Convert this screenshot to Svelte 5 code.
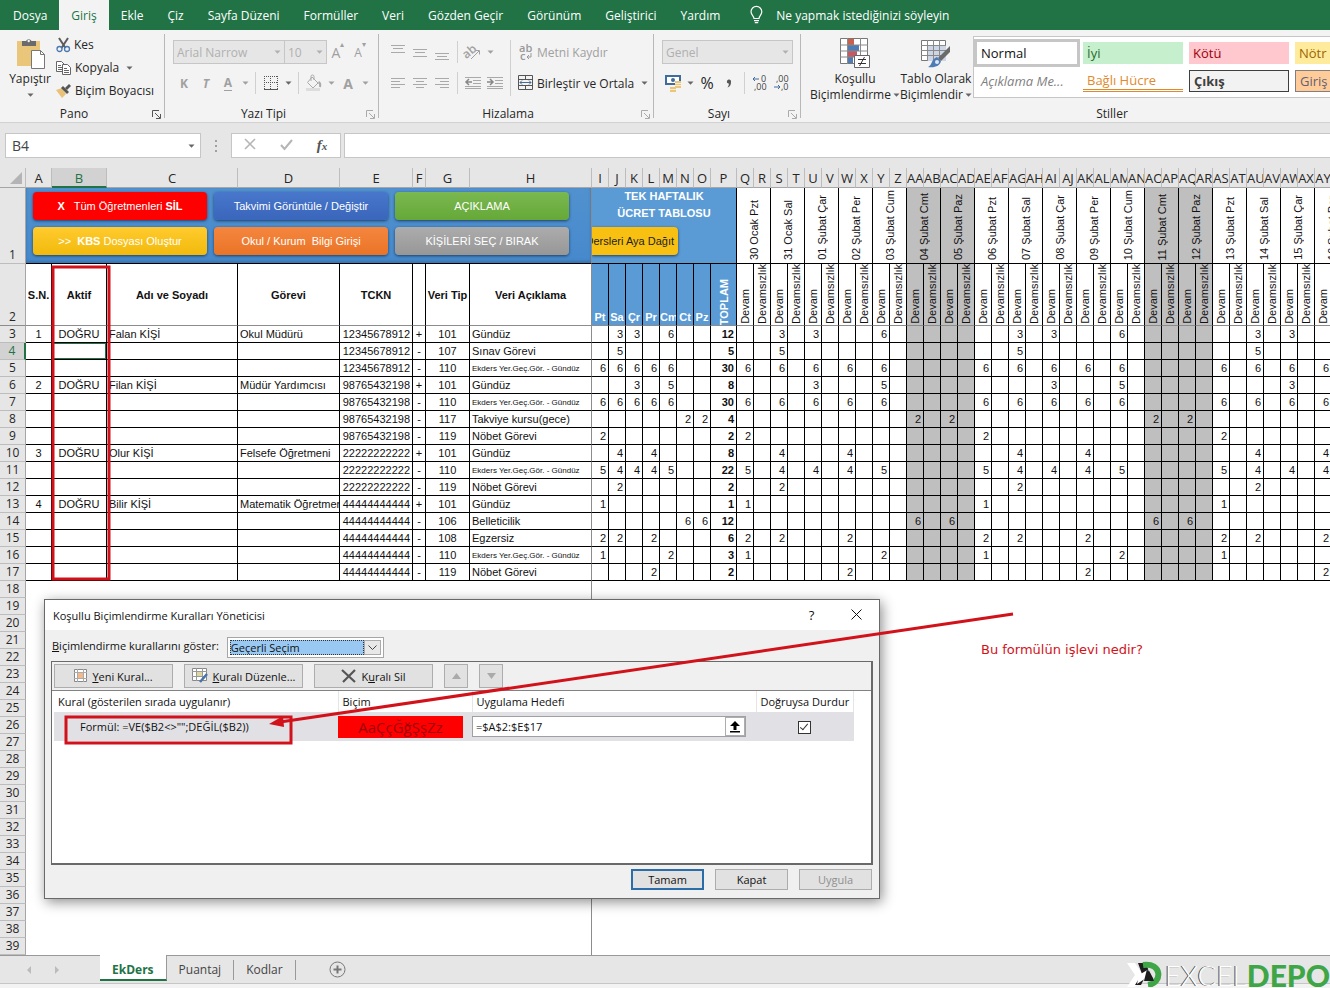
<script lang="ts">
	interface Row {
		no?: number;
		name?: string;
		duty?: string;
		tckn: string;
		sign: string;
		type: number;
		text: string;
		week: number[];
	}

	const menu = [
		'Dosya',
		'Giriş',
		'Ekle',
		'Çiz',
		'Sayfa Düzeni',
		'Formüller',
		'Veri',
		'Gözden Geçir',
		'Görünüm',
		'Geliştirici',
		'Yardım'
	];

	const styles = [
		{ label: 'Normal', kind: 'normal' },
		{ label: 'İyi', kind: 'good' },
		{ label: 'Kötü', kind: 'bad' },
		{ label: 'Nötr', kind: 'neutral' },
		{ label: 'Açıklama Me...', kind: 'explain' },
		{ label: 'Bağlı Hücre', kind: 'linked' },
		{ label: 'Çıkış', kind: 'output' },
		{ label: 'Giriş', kind: 'entry' }
	];

	const rows: Row[] = [
		{ no: 1, name: 'Falan KİŞİ', duty: 'Okul Müdürü', tckn: '12345678912', sign: '+', type: 101, text: 'Gündüz', week: [0, 3, 3, 0, 6, 0, 0] },
		{ tckn: '12345678912', sign: '-', type: 107, text: 'Sınav Görevi', week: [0, 5, 0, 0, 0, 0, 0] },
		{ tckn: '12345678912', sign: '-', type: 110, text: 'Ekders Yer.Geç.Gör. - Gündüz', week: [6, 6, 6, 6, 6, 0, 0] },
		{ no: 2, name: 'Filan KİŞİ', duty: 'Müdür Yardımcısı', tckn: '98765432198', sign: '+', type: 101, text: 'Gündüz', week: [0, 0, 3, 0, 5, 0, 0] },
		{ tckn: '98765432198', sign: '-', type: 110, text: 'Ekders Yer.Geç.Gör. - Gündüz', week: [6, 6, 6, 6, 6, 0, 0] },
		{ tckn: '98765432198', sign: '-', type: 117, text: 'Takviye kursu(gece)', week: [0, 0, 0, 0, 0, 2, 2] },
		{ tckn: '98765432198', sign: '-', type: 119, text: 'Nöbet Görevi', week: [2, 0, 0, 0, 0, 0, 0] },
		{ no: 3, name: 'Olur KİŞİ', duty: 'Felsefe Öğretmeni', tckn: '22222222222', sign: '+', type: 101, text: 'Gündüz', week: [0, 4, 0, 4, 0, 0, 0] },
		{ tckn: '22222222222', sign: '-', type: 110, text: 'Ekders Yer.Geç.Gör. - Gündüz', week: [5, 4, 4, 4, 5, 0, 0] },
		{ tckn: '22222222222', sign: '-', type: 119, text: 'Nöbet Görevi', week: [0, 2, 0, 0, 0, 0, 0] },
		{ no: 4, name: 'Bilir KİŞİ', duty: 'Matematik Öğretmeni', tckn: '44444444444', sign: '+', type: 101, text: 'Gündüz', week: [1, 0, 0, 0, 0, 0, 0] },
		{ tckn: '44444444444', sign: '-', type: 106, text: 'Belleticilik', week: [0, 0, 0, 0, 0, 6, 6] },
		{ tckn: '44444444444', sign: '-', type: 108, text: 'Egzersiz', week: [2, 2, 0, 2, 0, 0, 0] },
		{ tckn: '44444444444', sign: '-', type: 110, text: 'Ekders Yer.Geç.Gör. - Gündüz', week: [1, 0, 0, 0, 2, 0, 0] },
		{ tckn: '44444444444', sign: '-', type: 119, text: 'Nöbet Görevi', week: [0, 0, 0, 2, 0, 0, 0] }
	];

	const weekLabels = ['Pt', 'Sa', 'Çr', 'Pr', 'Cm', 'Ct', 'Pz'];
	const dayNames = ['Pzt', 'Sal', 'Çar', 'Per', 'Cum', 'Cmt', 'Paz'];

	// 30 Ocak is a Monday
	const days = Array.from({ length: 18 }, (_, i) => ({
		label: `${i < 2 ? `${30 + i} Ocak` : `${String(i - 1).padStart(2, '0')} Şubat`} ${dayNames[i % 7]}`,
		weekday: i % 7,
		weekend: i % 7 > 4
	}));

	const slots = days.flatMap((day) => [
		{ ...day, absent: false },
		{ ...day, absent: true }
	]);

	const columnName = (i: number) =>
		(i >= 26 ? String.fromCharCode(64 + Math.floor(i / 26)) : '') + String.fromCharCode(65 + (i % 26));

	const columns = Array.from({ length: 52 }, (_, i) => columnName(i));
	const leadWidths = [26, 55, 131, 102, 73, 13, 44, 122, 17, 17, 17, 17, 17, 17, 17, 26];
	const widths = columns.map((_, i) => leadWidths[i] ?? 17);
	const emptyRows = Array.from({ length: 22 }, (_, i) => i + 18);

	const sum = (list: number[]) => list.reduce((a, b) => a + b, 0);

	let activeTab = $state('Giriş');
	let stopIfTrue = $state(true);
	let target = $state('=$A$2:$E$17');
</script>

{#snippet caret()}
	<svg class="caret" width="7" height="4" viewBox="0 0 7 4" aria-hidden="true"><path d="M.5.5h6l-3 3.300z" fill="currentColor" /></svg>
{/snippet}

{#snippet launcher()}
	<svg class="launcher" width="9" height="9" viewBox="0 0 9 9" fill="none" stroke="currentColor" aria-hidden="true">
		<path d="M.5 7V.5H7M3 3l5 5M8.500 4v4.500H4" />
	</svg>
{/snippet}

{#snippet lines(paths: string)}
	<svg width="15" height="15" viewBox="0 0 15 15" stroke="#a9a9a9" aria-hidden="true"><path d={paths} /></svg>
{/snippet}

<div class="app">
	<nav class="menu" aria-label="Şerit">
		{#each menu as item (item)}
			<button class="tab" class:active={activeTab === item} onclick={() => (activeTab = item)}>{item}</button>
		{/each}
		<button class="tab tell">
			<svg width="13" height="18" viewBox="0 0 13 18" fill="none" stroke="#fff" stroke-width="1.200" aria-hidden="true">
				<path d="M4 12.500C4 10 1 9 1 5.800a5.300 5.300 0 0 1 10.800 0C11.800 9 9 10 9 12.500zM4 14.600h5M4.800 16.700h3.400" />
			</svg>
			Ne yapmak istediğinizi söyleyin
		</button>
	</nav>

	<div class="ribbon">
		<section class="group pano">
			<div class="body">
				<button class="big paste">
					<svg width="30" height="32" viewBox="0 0 30 32" aria-hidden="true">
						<path d="M2 3h23v25H2z" fill="#eac67a" />
						<path d="M7 3h4a3 3 0 0 1 5.500 0H21v5H7z" fill="#6b6b6b" />
						<circle cx="13.700" cy="3" r="1.200" fill="#f3f3f3" />
						<path d="M16.500 12.500h9l4 4v14h-13z" fill="#fff" stroke="#777" />
						<path d="M25.500 12.500v4h4" fill="none" stroke="#777" />
					</svg>
					<span>Yapıştır</span>
					{@render caret()}
				</button>
				<div class="stack">
					<button>
						<svg width="15" height="16" viewBox="0 0 15 16" fill="none" aria-hidden="true">
							<path d="M3 1l6.500 10M12 1L5.500 11" stroke="#5c5c5c" stroke-width="2" />
							<circle cx="3.500" cy="12" r="2.500" stroke="#4a78b0" stroke-width="1.300" />
							<circle cx="11" cy="12" r="2.500" stroke="#4a78b0" stroke-width="1.300" />
						</svg>
						Kes
					</button>
					<button>
						<svg width="16" height="14" viewBox="0 0 16 14" fill="#fff" stroke="#666" aria-hidden="true">
							<path d="M.5.5h5l3 3v7h-8z" />
							<path d="M2 4.500h3M2 6.500h4M2 8.500h4" />
							<path d="M6.500 3.500h5l3 3v7h-8z" />
							<path d="M8 7.500h3M8 9.500h5M8 11.500h5" />
						</svg>
						Kopyala
						<span class="push">{@render caret()}</span>
					</button>
					<button>
						<svg width="16" height="14" viewBox="0 0 16 14" aria-hidden="true">
							<path d="M0 6l6-2 4 6-4 4z" fill="#e9c178" />
							<path d="M5 4l2-2 6 6-2 2z" fill="#555" />
							<path d="M9 4l4-4 2 2-4 4z" fill="#555" />
						</svg>
						Biçim Boyacısı
					</button>
				</div>
			</div>
			<footer><span>Pano</span><i class="dark">{@render launcher()}</i></footer>
		</section>

		<section class="group font">
			<div class="body column">
				<div class="line">
					<span class="select face"><select aria-label="Yazı tipi" disabled><option>Arial Narrow</option></select>{@render caret()}</span>
					<span class="select size"><select aria-label="Boyut" disabled><option>10</option></select>{@render caret()}</span>
					<button class="off grow" aria-label="Büyüt">A<sup>▴</sup></button>
					<button class="off shrink" aria-label="Küçült">A<sup>▾</sup></button>
				</div>
				<div class="line tools">
					<button class="off w22"><b>K</b></button>
					<button class="off w22"><b><em>T</em></b></button>
					<button class="off w22"><b class="under">A</b></button>
					<button class="off w12" aria-label="Alt çizgi">{@render caret()}</button>
					<span class="bar"></span>
					<button class="w22" aria-label="Kenarlık">
						<svg width="14" height="14" viewBox="0 0 14 14" fill="none" stroke="#555" aria-hidden="true">
							<path d="M.5 0v13M6.500 0v13M13.500 0v13M0 .5h14M0 6.500h14" stroke-dasharray="1 1" />
							<path d="M0 13.500h14" />
						</svg>
					</button>
					<button class="w12" aria-label="Kenarlıklar">{@render caret()}</button>
					<span class="bar"></span>
					<button class="off w22" aria-label="Dolgu">
						<svg width="16" height="16" viewBox="0 0 16 16" fill="none" stroke="#aaa" aria-hidden="true">
							<path d="M6 2l6 6-5 5-5.500-5.500zM5 6V1.500a1.500 1.500 0 0 1 3 0V5" />
							<path d="M12.500 7c2 1 2 3 1.500 5" stroke-width="2" />
							<path d="M0 14.500h14" stroke="#ddd" stroke-width="3" />
						</svg>
					</button>
					<button class="off w12" aria-label="Dolgu rengi">{@render caret()}</button>
					<button class="off w22 fontcolor"><b>A</b></button>
					<button class="off w12" aria-label="Yazı rengi">{@render caret()}</button>
				</div>
			</div>
			<footer><span>Yazı Tipi</span><i>{@render launcher()}</i></footer>
		</section>

		<section class="group align">
			<div class="body">
				<div class="left">
					<div class="line">
						<button class="off w22" aria-label="Üste hizala">{@render lines('M0 .5h14M2 3.500h10M0 7.500h14')}</button>
						<button class="off w22" aria-label="Ortala">{@render lines('M0 4.500h14M2 7.500h10M0 11.500h14')}</button>
						<button class="off w22" aria-label="Alta hizala">{@render lines('M0 8.500h14M2 11.500h10M0 14.500h14')}</button>
						<span class="bar"></span>
						<button class="off w22" aria-label="Yönlendirme">
							<svg width="18" height="16" viewBox="0 0 18 16" aria-hidden="true">
								<text x="-1" y="12" font-size="12" font-weight="600" fill="#a0a0a0" transform="rotate(-40 5 9)">ab</text>
								<path d="M7 15l8-8M11.500 6.500h4v4" fill="none" stroke="#a0a0a0" />
							</svg>
						</button>
						<button class="off w12" aria-label="Yön">{@render caret()}</button>
					</div>
					<div class="line tools">
						<button class="off w22" aria-label="Sola hizala">{@render lines('M0 2.500h14M0 5.500h9M0 8.500h14M0 11.500h9')}</button>
						<button class="off w22" aria-label="Ortaya hizala">{@render lines('M0 2.500h14M3 5.500h8M0 8.500h14M3 11.500h8')}</button>
						<button class="off w22" aria-label="Sağa hizala">{@render lines('M0 2.500h14M5 5.500h9M0 8.500h14M5 11.500h9')}</button>
						<span class="bar"></span>
						<button class="off w22" aria-label="Girintiyi azalt">
							<svg width="17" height="14" viewBox="0 0 17 14" stroke="#a9a9a9" fill="none" aria-hidden="true">
								<path d="M0 1.500h16M8 4.500h8M8 7.500h8M0 10.500h16M0 12.500h16" />
								<path d="M7 6H1M4 3L1 6l3 3" stroke="#888" stroke-width="1.500" />
							</svg>
						</button>
						<button class="off w22" aria-label="Girintiyi artır">
							<svg width="17" height="14" viewBox="0 0 17 14" stroke="#a9a9a9" fill="none" aria-hidden="true">
								<path d="M0 1.500h16M8 4.500h8M8 7.500h8M0 10.500h16M0 12.500h16" />
								<path d="M0 6h6M3 3l3 3-3 3" stroke="#888" stroke-width="1.500" />
							</svg>
						</button>
					</div>
				</div>
				<div class="right">
					<button class="off wide">
						<svg width="16" height="17" viewBox="0 0 16 17" aria-hidden="true">
							<text x="1" y="8" font-size="11" font-weight="600" fill="#999">ab</text>
							<text x="2" y="16" font-size="11" font-weight="600" fill="#999">c</text>
							<path d="M13 9v4H9M11 11l-2 2 2 2" fill="none" stroke="#999" />
						</svg>
						Metni Kaydır
					</button>
					<button class="wide">
						<svg width="16" height="16" viewBox="0 0 16 16" fill="none" stroke="#555" aria-hidden="true">
							<path d="M.5.5h14v14H.5zM.5 4.500h14M.5 10.500h14M7.500.5v4M7.500 10.500v4" />
							<path d="M2 7.500h11M4 5.500l-2 2 2 2M11 5.500l2 2-2 2" stroke="#4a6c94" />
						</svg>
						Birleştir ve Ortala
						<span class="push">{@render caret()}</span>
					</button>
				</div>
			</div>
			<footer><span>Hizalama</span><i>{@render launcher()}</i></footer>
		</section>

		<section class="group number">
			<div class="body column">
				<div class="line">
					<span class="select format"><select aria-label="Sayı biçimi" disabled><option>Genel</option></select>{@render caret()}</span>
				</div>
				<div class="line tools">
					<button class="w22" aria-label="Para birimi">
						<svg width="18" height="17" viewBox="0 0 18 17" aria-hidden="true">
							<path d="M2 1h14v8H2z" fill="#fff" stroke="#3f6c9c" stroke-width="2" />
							<circle cx="9" cy="5" r="2" fill="#3f6c9c" />
							<path d="M11 6h6v7h-6zM6 12h6v5H6z" fill="#eac67a" />
							<path d="M11 8.500h6M11 10.500h6M6 14.500h6" stroke="#f8ecd0" />
						</svg>
					</button>
					<button class="w12" aria-label="Para birimleri">{@render caret()}</button>
					<button class="w22 percent">%</button>
					<button class="w22" aria-label="Virgül"><svg width="6" height="9" viewBox="0 0 6 9" aria-hidden="true"><path d="M1 2a2 2 0 1 1 4 1C5 6 4 7.500 1.500 8.500 2.500 7 3 6 2.800 4.500A2 2 0 0 1 1 2z" fill="#555" /></svg></button>
					<span class="bar"></span>
					<button class="w22" aria-label="Ondalık artır">
						<svg width="16" height="16" viewBox="0 0 16 16" aria-hidden="true">
							<text x="9" y="7" font-size="9" fill="#444">0</text>
							<text x="2" y="15" font-size="9" fill="#444">,00</text>
							<path d="M7 4H1M3 2L1 4l2 2" fill="none" stroke="#3f6c9c" />
						</svg>
					</button>
					<button class="w22" aria-label="Ondalık azalt">
						<svg width="16" height="16" viewBox="0 0 16 16" aria-hidden="true">
							<text x="2" y="7" font-size="9" fill="#444">,00</text>
							<text x="7" y="15" font-size="9" fill="#444">,0</text>
							<path d="M0 12h6M4 10l2 2-2 2" fill="none" stroke="#3f6c9c" />
						</svg>
					</button>
				</div>
			</div>
			<footer><span>Sayı</span><i>{@render launcher()}</i></footer>
		</section>

		<section class="group cellstyles">
			<div class="body">
				<button class="big cond">
					<svg width="30" height="32" viewBox="0 0 30 32" aria-hidden="true">
						<path d="M.5.5h27v25H.5z" fill="#fff" stroke="#777" />
						<path d="M8 1h6v6H8z" fill="#c8604c" />
						<path d="M8 7h11v6H8z" fill="#4f7db3" />
						<path d="M8 13h9v6H8z" fill="#c45a62" />
						<path d="M8 19h5v6H8z" fill="#4f7db3" />
						<path d="M7.500 0v26M20.500 0v26M0 7h28M0 13h28M0 19h28" stroke="#8a8a8a" fill="none" />
						<path d="M14.500 17.500h15v12h-15z" fill="#fff" stroke="#666" />
						<path d="M18 21.500h8M18 25.500h8M24.500 19l-5 9" stroke="#333" />
					</svg>
					<span>Koşullu</span>
					<span class="drop">Biçimlendirme{@render caret()}</span>
				</button>
				<button class="big">
					<svg width="30" height="32" viewBox="0 0 30 32" aria-hidden="true">
						<path d="M.5 2.500h24v20H.5z" fill="#fff" stroke="#777" />
						<path d="M7 8h18v15H7z" fill="#cdd6e6" />
						<path d="M6.500 2v21M12.500 2v21M18.500 2v21M0 7.500h25M0 12.500h25M0 17.500h25" stroke="#8a8a8a" fill="none" />
						<path d="M29 8v6L20 23l-3-3z" fill="#6a6a6a" />
						<path d="M16 19l4 4c-1 5-6 7-13 6 4-1 3-8 9-10z" fill="#4f7db3" />
						<circle cx="16" cy="24" r="2" fill="#dfe8f3" />
					</svg>
					<span>Tablo Olarak</span>
					<span class="drop">Biçimlendir{@render caret()}</span>
				</button>
				<div class="gallery">
					{#each styles as style (style.kind)}
						<button class={style.kind}>{style.label}</button>
					{/each}
				</div>
			</div>
			<footer><span>Stiller</span></footer>
		</section>
	</div>

	<div class="formula">
		<span class="namebox"><input aria-label="Ad kutusu" value="B4" />{@render caret()}</span>
		<svg width="3" height="12" viewBox="0 0 3 12" fill="#a0a0a0" aria-hidden="true"><path d="M0 0h2v2H0zM0 5h2v2H0zM0 10h2v2H0z" /></svg>
		<div class="fx">
			<button aria-label="İptal"><svg width="12" height="12" viewBox="0 0 12 12" aria-hidden="true"><path d="M1 1l10 10M11 1L1 11" stroke="#b5b5b5" stroke-width="1.600" /></svg></button>
			<button aria-label="Gir"><svg width="13" height="11" viewBox="0 0 13 11" aria-hidden="true"><path d="M1 6l3.500 4L12 1" fill="none" stroke="#b5b5b5" stroke-width="2" /></svg></button>
			<button><em>f<small>x</small></em></button>
		</div>
		<input class="entry-line" aria-label="Formül çubuğu" />
	</div>

	<main class="sheet">
		<table class="grid">
			<colgroup>
				<col style="width: 26px" />
				{#each widths as w, i (i)}
					<col style="width: {w}px" />
				{/each}
			</colgroup>
			<thead>
				<tr class="letters">
					<th class="corner"><svg width="12" height="12" viewBox="0 0 12 12" aria-hidden="true"><path d="M12 0v12H0z" fill="#b4b4b4" /></svg></th>
					{#each columns as name (name)}
						<th class:picked={name === 'B'}>{name}</th>
					{/each}
				</tr>
			</thead>
			<tbody>
				<tr class="banner">
					<th class="rowno">1</th>
					<td colspan="8" class="actions">
						<div class="buttons">
							<button class="red"><b>X</b>&nbsp;&nbsp; Tüm Öğretmenleri <b>SİL</b></button>
							<button class="blue">Takvimi Görüntüle / Değiştir</button>
							<button class="green">AÇIKLAMA</button>
							<button class="yellow">&gt;&gt;&nbsp; <b>KBS</b> Dosyası Oluştur</button>
							<button class="orange">Okul / Kurum&nbsp; Bilgi Girişi</button>
							<button class="grey">KİŞİLERİ SEÇ / BIRAK</button>
						</div>
					</td>
					<td colspan="8" class="weekly">
						<div>TEK HAFTALIK<br />ÜCRET TABLOSU</div>
						<button><span>Dersleri Aya Dağıt</span></button>
					</td>
					{#each days as day, i (i)}
						<th colspan="2" class="date" class:weekend={day.weekend}><span class="upright">{day.label}</span></th>
					{/each}
				</tr>
				<tr class="titles">
					<th class="rowno">2</th>
					<th>S.N.</th>
					<th>Aktif</th>
					<th>Adı ve Soyadı</th>
					<th>Görevi</th>
					<th>TCKN</th>
					<th></th>
					<th>Veri Tip</th>
					<th class="freeze">Veri Açıklama</th>
					{#each weekLabels as label (label)}
						<th class="wk">{label}</th>
					{/each}
					<th class="wk"><span class="upright">TOPLAM</span></th>
					{#each slots as slot, i (i)}
						<th class="slot" class:weekend={slot.weekend}><span class="upright">{slot.absent ? 'Devamsızlık' : 'Devam'}</span></th>
					{/each}
				</tr>
				{#each rows as row, r (r)}
					<tr class="entries">
						<th class="rowno" class:picked={r === 1}>{r + 3}</th>
						<td class="mid">{row.no ?? ''}</td>
						<td class="mid" class:cursor={r === 1}>{row.no ? 'DOĞRU' : ''}</td>
						<td>{row.name ?? ''}</td>
						<td>{row.duty ?? ''}</td>
						<td class="num">{row.tckn}</td>
						<td class="mid">{row.sign}</td>
						<td class="mid">{row.type}</td>
						<td class="freeze" class:tiny={row.type === 110}>{row.text}</td>
						{#each row.week as value, i (i)}
							<td class="num">{value || ''}</td>
						{/each}
						<td class="num total">{sum(row.week)}</td>
						{#each slots as slot, i (i)}
							<td class="num" class:weekend={slot.weekend}>{slot.absent ? '' : row.week[slot.weekday] || ''}</td>
						{/each}
					</tr>
				{/each}
				{#each emptyRows as n (n)}
					<tr class="empty">
						<th class="rowno">{n}</th>
						<td colspan="8" class="freeze"></td>
						<td colspan="44"></td>
					</tr>
				{/each}
			</tbody>
		</table>

		<div class="dialog" role="dialog" aria-labelledby="dialog-title">
			<header>
				<h2 id="dialog-title">Koşullu Biçimlendirme Kuralları Yöneticisi</h2>
				<button class="help">?</button>
				<button aria-label="Pencereyi kapat"><svg width="11" height="11" viewBox="0 0 11 11" aria-hidden="true"><path d="M.5.5l10 10M10.500.5l-10 10" stroke="#111" /></svg></button>
			</header>
			<div class="scope">
				<label for="scope"><u>B</u>içimlendirme kurallarını göster:</label>
				<span class="combo">
					<select id="scope"><option>Geçerli Seçim</option></select>
					<i><svg width="9" height="6" viewBox="0 0 9 6" fill="none" stroke="#444" aria-hidden="true"><path d="M.5.5l4 4 4-4" /></svg></i>
				</span>
			</div>
			<div class="panel">
				<div class="toolbar">
					<button class="tool">
						<svg width="14" height="14" viewBox="0 0 14 14" fill="none" stroke="#888" aria-hidden="true">
							<path d="M.5.5h12v12H.5z" fill="#fff" />
							<path d="M4 4h6v5H4z" fill="#f1b98c" stroke="none" />
							<path d="M3.500 0v13M9.500 0v13M0 3.500h13M0 9.500h13" stroke="#aaa" />
						</svg>
						<span><u>Y</u>eni Kural...</span>
					</button>
					<button class="tool">
						<svg width="17" height="16" viewBox="0 0 17 16" fill="none" stroke="#888" aria-hidden="true">
							<path d="M.5.5h14v12H.5z" fill="#fff" />
							<path d="M5 4h6v5H5z" fill="#ddd6a0" stroke="none" />
							<path d="M4.500 0v13M10.500 0v13M0 3.500h15M0 8.500h15" stroke="#999" />
							<path d="M15 6l-7 8" stroke="#4a74a8" stroke-width="2.500" />
						</svg>
						<span><u>K</u>uralı Düzenle...</span>
					</button>
					<button class="tool">
						<svg width="16" height="14" viewBox="0 0 16 14" aria-hidden="true"><path d="M1 1l13 12M14 1L2 13" stroke="#555" stroke-width="2.200" /></svg>
						<span>K<u>u</u>ralı Sil</span>
					</button>
					<button class="move" disabled aria-label="Yukarı"><svg width="9" height="6" viewBox="0 0 9 6" aria-hidden="true"><path d="M4.500 0L9 6H0z" fill="#aaa" /></svg></button>
					<button class="move" disabled aria-label="Aşağı"><svg width="9" height="6" viewBox="0 0 9 6" aria-hidden="true"><path d="M0 0h9L4.500 6z" fill="#aaa" /></svg></button>
				</div>
				<table class="rules">
					<thead>
						<tr>
							<th class="rule">Kural (gösterilen sırada uygulanır)</th>
							<th class="look">Biçim</th>
							<th class="target">Uygulama Hedefi</th>
							<th class="stop">Doğruysa Durdur</th>
						</tr>
					</thead>
					<tbody>
						<tr>
							<td>Formül: =VE($B2&lt;&gt;"";DEĞİL($B2))</td>
							<td><span class="swatch">AaÇçĞğŞşZz</span></td>
							<td>
								<div class="range">
									<input aria-label="Uygulama Hedefi" bind:value={target} />
									<button aria-label="Aralık seç"><svg width="10" height="12" viewBox="0 0 10 12" aria-hidden="true"><path d="M5 0l5 5H6.500v4h-3V5H0zM0 10h10v1.500H0z" /></svg></button>
								</div>
							</td>
							<td class="check"><input type="checkbox" aria-label="Doğruysa Durdur" bind:checked={stopIfTrue} /></td>
						</tr>
					</tbody>
				</table>
			</div>
			<div class="confirm">
				<button class="default">Tamam</button>
				<button>Kapat</button>
				<button disabled>Uygula</button>
			</div>
		</div>

		<svg class="marks" aria-hidden="true" fill="none" stroke="#d2121a" stroke-width="3">
			<rect x="53" y="99" width="56" height="312" />
			<rect x="66" y="549" width="225" height="26" />
			<path d="M1013 446L280 554" />
			<path d="M269 556l14-8 1 11z" fill="#d2121a" stroke="none" />
		</svg>
		<p class="question">Bu formülün işlevi nedir?</p>
	</main>

	<div class="sheettabs">
		<button class="arrow" aria-label="Önceki"><svg width="4" height="8" viewBox="0 0 4 8" aria-hidden="true"><path d="M4 0v8L0 4z" fill="#bbb" /></svg></button>
		<button class="arrow" aria-label="Sonraki"><svg width="4" height="8" viewBox="0 0 4 8" aria-hidden="true"><path d="M0 0v8l4-4z" fill="#bbb" /></svg></button>
		<button class="name current">EkDers</button>
		<button class="name">Puantaj</button>
		<button class="name">Kodlar</button>
		<button class="add" aria-label="Yeni sayfa">
			<svg width="17" height="17" viewBox="0 0 17 17" fill="none" stroke="#777" aria-hidden="true"><circle cx="8.500" cy="8.500" r="7.500" /><path d="M4.500 8.500h8M8.500 4.500v8" stroke-width="2" /></svg>
		</button>
		<div class="brand">
			<svg width="38" height="26" viewBox="0 0 38 26" aria-hidden="true">
				<path d="M0 1h8l8 12-8 12H0l8-12z" fill="#fff" />
				<path d="M11 1h7l9 17-6 1-3-4-4 8H8l7-11z" fill="#1d1d1d" />
				<path d="M12 13l10-6-3 9-9 6z" fill="#fff" />
				<path d="M16 3c19-3 20 18 5 20" fill="none" stroke="#3fa648" stroke-width="6" />
				<path d="M20 7l7 12H17z" fill="#1d1d1d" />
			</svg>
			<span class="thin">EXCEL</span><span class="fat">DEPO</span>
		</div>
	</div>
</div>

<style>
	:global(body) {
		background: #f3f3f3;
	}

	.app {
		font-family: 'Open Sans', 'Noto Sans', sans-serif;
		font-size: 12px;
		color: #262626;
		overflow: hidden;
	}

	button,
	input,
	select {
		font: inherit;
		color: inherit;
		border: 0;
		padding: 0;
		margin: 0;
		background: none;
		box-sizing: border-box;
	}

	button {
		white-space: nowrap;
	}

	svg {
		overflow: visible;
	}

	.menu {
		display: flex;
		height: 30px;
		padding-left: 1px;
		background: #217346;
	}

	.tab {
		padding: 0 12px;
		color: #fff;
	}

	.tab.active {
		background: #f3f3f3;
		color: #217346;
	}

	.tell {
		display: flex;
		align-items: center;
		gap: 13px;
		padding-left: 18px;
	}

	.ribbon {
		display: flex;
		height: 93px;
		background: #f3f3f3;
		border-bottom: 1px solid #d2d2d2;
		box-sizing: border-box;
		overflow: hidden;
	}

	.group {
		display: flex;
		flex-direction: column;
		flex: none;
		position: relative;
		box-sizing: border-box;
	}

	.group::after {
		content: '';
		position: absolute;
		right: 0;
		top: 4px;
		bottom: 4px;
		border-right: 1px solid #b8b8b8;
	}

	.pano {
		width: 165px;
	}

	.font {
		width: 214px;
	}

	.align {
		width: 275px;
	}

	.number {
		width: 147px;
	}

	.cellstyles {
		width: 626px;
	}

	.body {
		display: flex;
		height: 76px;
		box-sizing: border-box;
	}

	.body.column {
		flex-direction: column;
		padding: 8px 8px 0;
	}

	footer {
		display: flex;
		align-items: center;
		height: 16px;
		line-height: 16px;
	}

	footer span {
		flex: 1;
		text-align: center;
		padding-right: 4px;
	}

	footer i {
		display: flex;
		color: #aaa;
		margin-right: 4px;
	}

	footer i.dark {
		color: #555;
	}

	.caret {
		flex: none;
		color: #666;
	}

	.big {
		display: flex;
		flex-direction: column;
		align-items: center;
		padding-top: 8px;
		line-height: 16px;
	}

	.big > svg:first-child {
		margin-bottom: 1px;
	}

	.drop {
		display: flex;
		align-items: center;
		gap: 2px;
	}

	.paste {
		width: 56px;
		padding-left: 4px;
	}

	.paste .caret {
		margin-top: 6px;
	}

	.stack {
		display: flex;
		flex-direction: column;
		padding-top: 3px;
	}

	.stack button {
		display: flex;
		align-items: center;
		gap: 3px;
		height: 23px;
	}

	.push {
		display: flex;
		margin-left: 4px;
	}

	.line {
		display: flex;
		align-items: center;
		height: 28px;
	}

	.tools {
		height: 34px;
	}

	.line button {
		display: flex;
		align-items: center;
		justify-content: center;
		height: 24px;
	}

	.w22 {
		width: 22px;
	}

	.w12 {
		width: 12px;
	}

	.off,
	.off .caret {
		color: #a0a0a0;
	}

	.under {
		border-bottom: 1px solid #a0a0a0;
		line-height: 14px;
	}

	.bar {
		width: 1px;
		height: 22px;
		margin: 0 4px;
		background: #d0d0d0;
	}

	.select {
		position: relative;
		display: flex;
		height: 24px;
		border: 1px solid #c6c6c6;
		background: #e6e6e6;
		box-sizing: border-box;
	}

	.select select {
		appearance: none;
		width: 100%;
		padding-left: 3px;
		color: #b0b0b0;
		opacity: 1;
	}

	.select .caret {
		position: absolute;
		right: 3px;
		top: 9px;
		color: #b0b0b0;
	}

	.face {
		width: 112px;
	}

	.size {
		width: 43px;
		margin-left: -1px;
	}

	.format {
		width: 131px;
	}

	.grow,
	.shrink {
		width: 22px;
		font-size: 14px;
	}

	.shrink {
		font-size: 12px;
	}

	.line sup {
		font-size: 8px;
		line-height: 1;
		align-self: flex-start;
	}

	.fontcolor {
		font-size: 14px;
	}

	.left {
		display: flex;
		flex-direction: column;
		padding: 8px 0 0 8px;
		width: 131px;
		box-sizing: border-box;
	}

	.right {
		margin-top: 10px;
		height: 56px;
		padding-left: 7px;
		border-left: 1px solid #d0d0d0;
	}

	.wide {
		display: flex;
		align-items: center;
		gap: 3px;
		height: 24px;
		margin-bottom: 7px;
	}

	.percent {
		font-size: 16px;
	}

	.cond {
		margin-left: 9px;
	}

	.gallery {
		display: grid;
		grid-template-columns: repeat(5, 100px);
		gap: 6px;
		align-content: center;
		flex: 1;
		height: 62px;
		margin: 6px 0 0 1px;
		padding-left: 3px;
		background: #fff;
		border: 1px solid #c6c6c6;
		box-sizing: border-box;
		overflow: hidden;
	}

	.gallery button {
		height: 22px;
		padding-left: 4px;
		text-align: left;
		font-size: 13px;
	}

	.gallery .normal {
		outline: 3px solid #c6c6c6;
		color: #111;
	}

	.gallery .good {
		background: #c6efce;
		color: #2a6b2a;
	}

	.gallery .bad {
		background: #ffc7ce;
		color: #9c0006;
	}

	.gallery .neutral {
		background: #ffeb9c;
		color: #9c6500;
	}

	.gallery .explain {
		grid-column: 1;
		font-style: italic;
		color: #7f7f7f;
	}

	.gallery .linked {
		border-bottom: 3px double #e08a2e;
		color: #e08a2e;
	}

	.gallery .output {
		border: 1px solid #3f3f3f;
		background: #f2f2f2;
		font-weight: 700;
		color: #3f3f3f;
	}

	.gallery .entry {
		border: 1px solid #7f7f7f;
		background: #ffcc99;
		color: #5f5f76;
	}

	.formula {
		display: flex;
		align-items: center;
		height: 45px;
		padding-left: 5px;
		background: #e6e6e6;
		box-sizing: border-box;
	}

	.namebox {
		position: relative;
		width: 196px;
		margin-right: 14px;
	}

	.namebox input {
		width: 100%;
		height: 25px;
		padding-left: 6px;
		font-size: 14px;
		color: #444;
		background: #fff;
		border: 1px solid #c6c6c6;
	}

	.namebox .caret {
		position: absolute;
		right: 6px;
		top: 11px;
	}

	.fx {
		display: flex;
		justify-content: space-around;
		width: 110px;
		height: 25px;
		margin-left: 13px;
		background: #fff;
		border: 1px solid #c6c6c6;
		box-sizing: border-box;
	}

	.fx button {
		width: 36px;
	}

	.fx em {
		font-family: 'Liberation Serif', serif;
		font-size: 15px;
		font-weight: 700;
		color: #555;
	}

	.fx small {
		font-size: 11px;
	}

	.entry-line {
		flex: 1;
		height: 25px;
		margin-left: 3px;
		background: #fff;
		border: 1px solid #c6c6c6;
		border-right: 0;
	}

	.sheet {
		position: relative;
		background: #fff;
		overflow: hidden;
	}

	.grid {
		table-layout: fixed;
		width: 0;
		border-collapse: separate;
		border-spacing: 0;
		font-family: 'Liberation Sans', Arial, sans-serif;
		font-size: 11px;
		line-height: 16px;
		color: #111;
	}

	.grid th,
	.grid td {
		height: 17px;
		padding: 0;
		box-sizing: border-box;
		white-space: nowrap;
		overflow: hidden;
		border-right: 1px solid #000;
		border-bottom: 1px solid #000;
	}

	.grid .entries td {
		padding: 1px 2px 0;
		line-height: 15px;
	}

	.grid .letters th {
		height: 20px;
		padding-top: 1px;
		font-family: 'Open Sans', 'Noto Sans', sans-serif;
		font-size: 13px;
		font-weight: 400;
		color: #262626;
		background: #e6e6e6;
		border-right: 1px solid #bdbdbd;
		border-bottom: 1px solid #a6a6a6;
	}

	.grid .letters .corner {
		text-align: right;
		padding-right: 3px;
		line-height: 0;
	}

	.grid .letters .picked {
		background: #d2d2d2;
		color: #217346;
		border-bottom: 2px solid #217346;
	}

	.grid .rowno {
		font-family: 'Open Sans', 'Noto Sans', sans-serif;
		font-size: 12px;
		font-weight: 400;
		color: #262626;
		vertical-align: bottom;
		background: #e6e6e6;
		border-right: 1px solid #a6a6a6;
		border-bottom: 1px solid #bdbdbd;
	}

	.grid .rowno.picked {
		background: #d2d2d2;
		color: #217346;
		border-right: 2px solid #217346;
	}

	.grid .banner > * {
		height: 76px;
	}

	.grid .actions {
		padding: 0 7px;
		background: linear-gradient(#5191cf, #4689cc);
		border-right-color: #8c8c8c;
		box-shadow: inset 0 -2px 3px #3a73ad;
	}

	.buttons {
		display: grid;
		grid-template-columns: repeat(3, 174px);
		gap: 7px;
		padding-bottom: 4px;
	}

	.buttons button,
	.weekly button {
		height: 28px;
		border-radius: 4px;
		color: #fff;
		box-shadow: 0 1px 3px #1c3f66;
	}

	.red {
		background: #fe0000;
	}

	.blue {
		background: linear-gradient(#4877cc, #3a66bb);
	}

	.green {
		background: linear-gradient(#7ab850, #66a838);
	}

	.yellow {
		background: linear-gradient(#ffcb2e, #f2ba0c);
	}

	.orange {
		background: linear-gradient(#f5863f, #ea7426);
	}

	.grey {
		background: linear-gradient(#acacac, #979797);
	}

	.grid .weekly {
		padding: 0;
		vertical-align: top;
		background: #5b9bd5;
		color: #fff;
		font-weight: 700;
		line-height: 17px;
		text-align: center;
	}

	.weekly button {
		display: flex;
		align-items: center;
		justify-content: flex-end;
		width: 86px;
		margin-top: 5px;
		padding-right: 4px;
		border-radius: 0 4px 4px 0;
		background: #f8c112;
		color: #222;
		font-weight: 400;
		overflow: hidden;
	}

	.upright {
		display: inline-block;
		writing-mode: vertical-rl;
		transform: rotate(180deg);
		vertical-align: bottom;
	}

	.grid .date {
		font-weight: 400;
		vertical-align: bottom;
		padding-bottom: 3px;
	}

	.grid .titles th {
		height: 62px;
		border-bottom-color: #8c8c8c;
	}

	.grid .titles .rowno,
	.grid .titles .wk,
	.grid .titles .slot {
		vertical-align: bottom;
	}

	.grid .titles .wk {
		background: #5b9bd5;
		color: #fff;
	}

	.grid .titles .slot {
		font-weight: 400;
		padding-bottom: 1px;
	}

	.grid .weekend {
		background: #bfbfbf;
	}

	.grid .freeze {
		border-right-color: #8c8c8c;
	}

	.grid .mid {
		text-align: center;
	}

	.grid .num {
		text-align: right;
	}

	.grid .total {
		font-weight: 700;
	}

	.grid .tiny {
		font-size: 8px;
	}

	.grid .cursor {
		box-shadow: inset 0 0 0 1px #217346;
	}

	.grid .empty td {
		border-bottom: 0;
	}

	.grid .empty td:last-child {
		border-right: 0;
	}

	.dialog {
		position: absolute;
		left: 44px;
		top: 431px;
		width: 836px;
		box-sizing: border-box;
		background: #f0f0f0;
		border: 1px solid #696969;
		box-shadow: 2px 3px 12px rgba(0, 0, 0, 0.45);
		font-size: 11px;
		color: #111;
	}

	.dialog header {
		display: flex;
		align-items: center;
		height: 30px;
		padding-left: 8px;
		background: #fff;
	}

	h2 {
		flex: 1;
		margin: 0;
		font-size: 11px;
		font-weight: 400;
	}

	.dialog header button {
		width: 45px;
		height: 30px;
	}

	.dialog .help {
		font-size: 13px;
	}

	.scope {
		display: flex;
		align-items: center;
		gap: 8px;
		height: 31px;
		padding-left: 7px;
	}

	.combo {
		display: flex;
		width: 157px;
		height: 21px;
		margin-top: 4px;
		padding: 2px;
		background: #fff;
		border: 1px solid #a6a6a6;
		box-sizing: border-box;
	}

	.combo select {
		appearance: none;
		flex: 1;
		line-height: 13px;
		background: #99c9f3;
		border: 1px dotted #333;
	}

	.combo i {
		display: flex;
		align-items: center;
		justify-content: center;
		width: 17px;
		background: #e8e8e8;
		border: 1px solid #aaa;
		box-sizing: border-box;
	}

	.panel {
		margin: 0 6px;
		height: 204px;
		border: 1px solid #696969;
		border-right-width: 2px;
		border-bottom-width: 2px;
		box-sizing: border-box;
		background: #fff;
	}

	.toolbar {
		display: flex;
		gap: 11px;
		height: 29px;
		padding: 2px 2px 0;
		box-sizing: border-box;
		background: #f0f0f0;
		border-bottom: 1px solid #828282;
	}

	.toolbar button {
		display: flex;
		align-items: center;
		justify-content: center;
		gap: 4px;
		height: 24px;
		background: #e1e1e1;
		border: 1px solid #adadad;
	}

	.tool {
		width: 119px;
	}

	.move {
		width: 24px;
	}

	.rules {
		table-layout: fixed;
		width: 800px;
		margin-left: 2px;
		border-collapse: collapse;
	}

	.rules th {
		height: 21px;
		padding: 0 4px;
		font-weight: 400;
		text-align: left;
		white-space: nowrap;
		border-right: 1px solid #e5e5e5;
		box-sizing: border-box;
	}

	.rule {
		width: 284px;
	}

	.look {
		width: 134px;
	}

	.target {
		width: 284px;
	}

	.rules td {
		height: 29px;
		padding: 0;
		background: #e1e0e4;
	}

	.rules td:first-child {
		padding-left: 26px;
	}

	.swatch {
		display: block;
		width: 125px;
		line-height: 22px;
		text-align: center;
		font-size: 15px;
		background: #ff0000;
		color: #9c0006;
	}

	.range {
		display: flex;
		width: 274px;
		height: 21px;
		background: #fff;
		border: 1px solid #a0a0a0;
		box-sizing: border-box;
	}

	.range input {
		flex: 1;
		padding-left: 3px;
	}

	.range button {
		display: flex;
		align-items: center;
		justify-content: center;
		width: 20px;
		border: 1px solid #adadad;
	}

	.rules .check {
		text-align: center;
	}

	.check input {
		appearance: none;
		width: 13px;
		height: 13px;
		background: #fff;
		border: 1px solid #333;
		vertical-align: middle;
	}

	.check input:checked::after {
		content: '';
		display: block;
		width: 3px;
		height: 7px;
		margin: 0 0 0 3px;
		border: solid #333;
		border-width: 0 1px 1px 0;
		transform: rotate(40deg);
	}

	.confirm {
		display: flex;
		justify-content: flex-end;
		gap: 11px;
		padding: 4px 7px 8px;
	}

	.confirm button {
		width: 73px;
		height: 21px;
		background: #e1e1e1;
		border: 1px solid #adadad;
	}

	.confirm .default {
		border: 2px solid #2a6da8;
	}

	.confirm button:disabled {
		color: #8f8f8f;
	}

	.marks {
		position: absolute;
		left: 0;
		top: 0;
		width: 100%;
		height: 100%;
		pointer-events: none;
	}

	.question {
		position: absolute;
		left: 981px;
		top: 472px;
		margin: 0;
		font-family: 'DejaVu Sans', sans-serif;
		font-size: 13px;
		line-height: 20px;
		color: #d2121a;
	}

	.sheettabs {
		position: relative;
		display: flex;
		height: 29px;
		padding: 0 0 0 20px;
		background: #e6e6e6;
		border-top: 1px solid #999;
		border-bottom: 1px solid #c6c6c6;
		margin-bottom: 3px;
		box-sizing: border-box;
	}

	.arrow {
		width: 18px;
		margin-right: 10px;
	}

	.name {
		height: 20px;
		margin-top: 4px;
		padding: 0 12px;
		line-height: 20px;
		color: #444;
		border-right: 1px solid #999;
	}

	.name.current {
		height: 26px;
		margin: -1px 0 0 24px;
		line-height: 24px;
		padding-top: 3px;
		font-weight: 700;
		color: #217346;
		background: #fff;
		border-bottom: 2px solid #217346;
	}

	.add {
		width: 17px;
		margin-left: 33px;
		padding-top: 4px;
	}

	.brand {
		position: absolute;
		right: 0;
		top: 5px;
		display: flex;
		align-items: center;
		height: 28px;
		font-family: Lato, sans-serif;
		font-size: 28px;
		line-height: 28px;
	}

	.thin {
		font-weight: 300;
		color: #fff;
		text-shadow: -1px 0 #444;
	}

	.fat {
		font-size: 30px;
		font-weight: 900;
		color: #3fa648;
	}
</style>
